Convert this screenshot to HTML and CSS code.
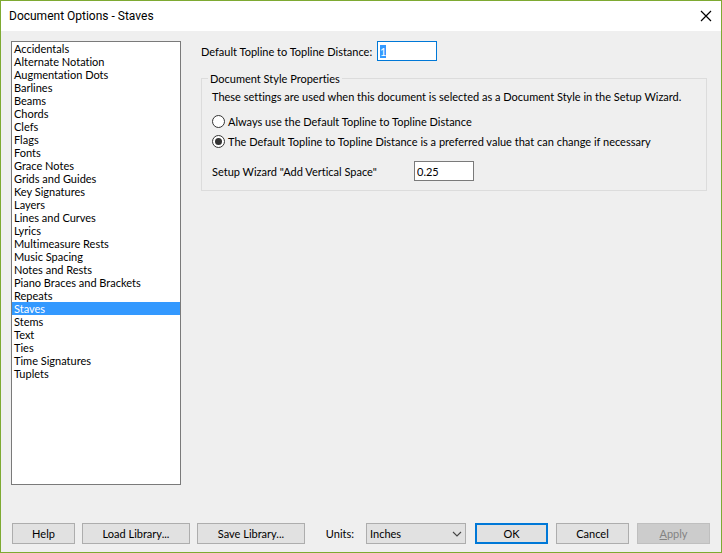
FILE: index.html
```
<!DOCTYPE html>
<html lang="en">

<head>
    <meta charset="UTF-8">
    <meta name="viewport" content="width=device-width, initial-scale=1.0">
    <title>Document Options - Staves</title>
    <link rel="stylesheet" href="styles.css">
</head>

<body>
    <div class="dialog">
        <header class="titlebar">
            <h1>Document Options - Staves</h1>
            <button type="button" class="close" aria-label="Close">
                <svg width="12" height="12" viewBox="0 0 12 12">
                    <path d="M1 1L11 11M11 1L1 11" stroke="#000" stroke-width="1.2" fill="none" />
                </svg>
            </button>
        </header>

        <form class="content">
            <div class="main">
                <select class="categories" size="26" aria-label="Category">
                    <option>Accidentals</option>
                    <option>Alternate Notation</option>
                    <option>Augmentation Dots</option>
                    <option>Barlines</option>
                    <option>Beams</option>
                    <option>Chords</option>
                    <option>Clefs</option>
                    <option>Flags</option>
                    <option>Fonts</option>
                    <option>Grace Notes</option>
                    <option>Grids and Guides</option>
                    <option>Key Signatures</option>
                    <option>Layers</option>
                    <option>Lines and Curves</option>
                    <option>Lyrics</option>
                    <option>Multimeasure Rests</option>
                    <option>Music Spacing</option>
                    <option>Notes and Rests</option>
                    <option>Piano Braces and Brackets</option>
                    <option>Repeats</option>
                    <option selected>Staves</option>
                    <option>Stems</option>
                    <option>Text</option>
                    <option>Ties</option>
                    <option>Time Signatures</option>
                    <option>Tuplets</option>
                </select>

                <div class="panel">
                    <div class="row">
                        <label for="distance">Default Topline to Topline Distance:</label>
                        <input type="text" id="distance" class="field" value="1">
                    </div>

                    <fieldset class="group">
                        <legend>Document Style Properties</legend>
                        <p>These settings are used when this document is selected as a Document Style in the Setup Wizard.</p>
                        <div class="choice">
                            <input type="radio" name="mode" id="always">
                            <label for="always">Always use the Default Topline to Topline Distance</label>
                        </div>
                        <div class="choice">
                            <input type="radio" name="mode" id="preferred" checked>
                            <label for="preferred">The Default Topline to Topline Distance is a preferred value that can change if necessary</label>
                        </div>
                        <div class="row wizard">
                            <label for="space">Setup Wizard "Add Vertical Space"</label>
                            <input type="text" id="space" class="field" value="0.25">
                        </div>
                    </fieldset>
                </div>
            </div>

            <footer class="actions">
                <button type="button" class="btn small">Help</button>
                <button type="button" class="btn wide">Load Library...</button>
                <button type="button" class="btn wide">Save Library...</button>
                <div class="units">
                    <label for="units">Units:</label>
                    <div class="dropdown">
                        <select id="units">
                            <option>Inches</option>
                        </select>
                        <svg width="10" height="6" viewBox="0 0 10 6">
                            <path d="M1 1L5 5L9 1" stroke="#444" stroke-width="1.1" fill="none" />
                        </svg>
                    </div>
                </div>
                <div class="confirm">
                    <button type="button" class="btn default">OK</button>
                    <button type="button" class="btn">Cancel</button>
                    <button type="button" class="btn" disabled><u>A</u>pply</button>
                </div>
            </footer>
        </form>
    </div>

    <script>
        // Start with the distance selected, ready to type over
        const distance = document.getElementById('distance');
        distance.focus();
        distance.select();
    </script>
</body>

</html>
```
FILE: styles.css
```
* {
    box-sizing: border-box;
}

body {
    margin: 0;
    font-family: Lato, "Liberation Sans", Arial, sans-serif;
    font-size: 11px;
    font-variant-ligatures: none;
    line-height: 13px;
    color: #000;
}

button,
input,
select {
    font: inherit;
    font-variant-ligatures: none;
    color: inherit;
    margin: 0;
    border-radius: 0;
}

.dialog {
    display: flex;
    flex-direction: column;
    min-height: 100vh;
    border: 1px solid #7eaa32;
    background: #efefef;
}

.titlebar {
    display: flex;
    align-items: center;
    justify-content: space-between;
    height: 30px;
    padding: 0 9px 0 8px;
    background: #fff;
}

.titlebar h1 {
    margin: 0;
    font-family: Roboto, "Open Sans", sans-serif;
    font-size: 12px;
    font-weight: normal;
}

.close {
    display: flex;
    padding: 0;
    border: none;
    background: none;
}

.content {
    display: flex;
    flex: 1;
    flex-direction: column;
    gap: 38px;
    padding: 10px 11px 8px 10px;
}

.main {
    display: flex;
    flex: 1;
    gap: 20px;
}

.categories {
    width: 170px;
    padding: 0;
    border: 1px solid #7a7a7a;
    background: #fff;
    overflow: hidden;
    outline: none;
}

.categories option {
    min-height: 13px;
    padding: 0 2px;
    line-height: 13px;
}

.categories option:checked {
    background: linear-gradient(#3399ff, #3399ff);
    -webkit-text-fill-color: #fff;
}

.panel {
    flex: 1;
    padding-right: 3px;
}

.row {
    display: flex;
    align-items: center;
}

.row label {
    width: 176px;
}

.field {
    width: 60px;
    height: 20px;
    padding: 0 2px;
    border: 1px solid #7a7a7a;
    background: #fff;
}

.field:focus {
    border-color: #0078d7;
    outline: none;
}

.field::selection {
    background: #3399ff;
    color: #fff;
}

.group {
    min-width: 0;
    margin: 11px 0 0;
    padding: 5px 10px 9px;
    border: 1px solid #dcdcdc;
}

.group legend {
    margin-left: -4px;
    padding: 0 2px;
}

.group p {
    margin: 0 0 8px;
}

.choice {
    display: flex;
    align-items: center;
    gap: 3px;
    height: 20px;
}

.choice input {
    display: grid;
    place-items: center;
    width: 13px;
    height: 13px;
    border: 1px solid #333;
    border-radius: 50%;
    background: #fff;
    appearance: none;
}

.choice input:checked::before {
    content: "";
    width: 7px;
    height: 7px;
    border-radius: 50%;
    background: #333;
}

.wizard {
    margin-top: 10px;
}

.wizard label {
    width: 202px;
}

.actions {
    display: flex;
    gap: 7px;
    padding-left: 1px;
}

.btn {
    width: 73px;
    height: 21px;
    padding: 0;
    border: 1px solid #adadad;
    background: #e1e1e1;
}

.btn.small {
    width: 63px;
}

.btn.wide {
    width: 108px;
}

.btn.default {
    border: 2px solid #0078d7;
}

.btn:disabled {
    border-color: #bfbfbf;
    background: #ccc;
    color: #838383;
}

.units {
    display: flex;
    align-items: center;
    gap: 12px;
    margin-left: auto;
}

.dropdown {
    display: grid;
    align-items: center;
    width: 100px;
}

.dropdown select,
.dropdown svg {
    grid-area: 1 / 1;
}

.dropdown select {
    width: 100%;
    height: 21px;
    padding: 0 3px;
    border: 1px solid #adadad;
    background: #e1e1e1;
    appearance: none;
}

.dropdown svg {
    justify-self: end;
    margin-right: 4px;
    pointer-events: none;
}

.confirm {
    display: flex;
    gap: 8px;
    margin-left: 2px;
}
```
